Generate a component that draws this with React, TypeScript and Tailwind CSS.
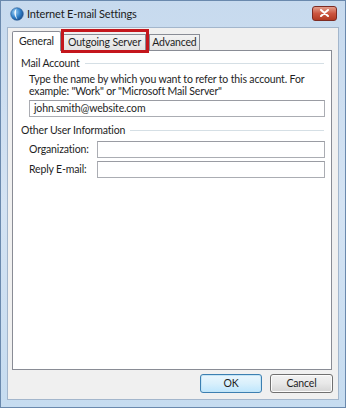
import React from "react";

const font = { fontFamily: 'Lato, "Noto Sans", Arial, sans-serif' };

const TitleIcon = () => (
  <svg width="14" height="14" viewBox="0 0 14 14">
    <defs>
      <radialGradient id="g1" cx="0.35" cy="0.35" r="0.7">
        <stop offset="0" stopColor="#9fd0f5" />
        <stop offset="0.6" stopColor="#2f7fc8" />
        <stop offset="1" stopColor="#1a4f8f" />
      </radialGradient>
    </defs>
    <circle cx="7" cy="7" r="6.3" fill="url(#g1)" stroke="#2a5d95" strokeWidth="0.6" />
    <path d="M6.5 1.5 C3.5 3.5 3.8 9.5 7.5 12.5 C5.5 9 5.6 4.5 6.5 1.5 Z" fill="#ffffff" opacity="0.9" />
  </svg>
);

const GroupLabel = ({ children }: { children: React.ReactNode }) => (
  <div className="flex items-center gap-[5px] pl-[8px] pr-[7px] h-[14px]">
    <span className="text-[10.5px] leading-[14px] text-[#1e1e1e] whitespace-nowrap">{children}</span>
    <div className="flex-1 h-px bg-[#d5dfe5] mt-[1px]" />
  </div>
);

const Field = ({ value = "", className = "" }: { value?: string; className?: string }) => (
  <div
    className={`h-[17px] bg-white border border-[#abadb3] border-t-[#9a9ca3] flex items-center px-[4px] text-[10.5px] text-[#1e1e1e] ${className}`}
  >
    {value}
  </div>
);

const App = () => {
  return (
    <div
      style={font}
      className="w-[346px] h-[408px] flex flex-col tracking-[-0.15px] bg-gradient-to-b from-[#c7daee] via-[#d4e3f3] to-[#c6dcf0] border border-[#6a89ad] overflow-hidden"
    >
      {/* title bar */}
      <div className="h-[26px] flex items-center pl-[9px] pr-[8px] shrink-0">
        <TitleIcon />
        <span className="ml-[3px] text-[11px] text-[#1b1b1b] mt-[1px]">Internet E-mail Settings</span>
        <div className="ml-auto mt-[-2px] w-[25px] h-[15px] rounded-[3px] border border-[#7d2b22] bg-gradient-to-b from-[#e29d8c] via-[#cc5640] to-[#b23a22] flex items-center justify-center">
          <svg width="9" height="8" viewBox="0 0 9 8">
            <path d="M1 1 L8 7 M8 1 L1 7" stroke="#ffffff" strokeWidth="2" strokeLinecap="round" />
          </svg>
        </div>
      </div>

      {/* client area */}
      <div className="flex-1 mx-[6px] mb-[7px] bg-[#f0f0f0] border border-[#a3b6cc] flex flex-col">
        {/* tabs */}
        <div className="flex items-end h-[20px] pl-[4px] mt-[2px]">
          <div className="h-[20px] px-[6px] bg-white border border-[#898c95] border-b-0 rounded-t-[2px] text-[10.5px] leading-[18px] text-[#1e1e1e] relative z-10 mb-[-1px]">
            General
          </div>
          <div className="relative ml-[3px]">
            <div className="h-[16px] px-[4px] bg-gradient-to-b from-[#f3f3f3] to-[#e3e3e3] border border-[#898c95] border-b-0 border-l-0 text-[10.5px] leading-[15px] text-[#1e1e1e]">
              Outgoing Server
            </div>
            <div className="absolute left-[-3px] right-[-3px] top-[-5px] bottom-[-3px] border-[3px] border-[#c4161c]" />
          </div>
          <div className="h-[16px] ml-[3px] px-[2px] bg-gradient-to-b from-[#f3f3f3] to-[#e3e3e3] border border-[#898c95] border-b-0 text-[10.5px] leading-[15px] text-[#1e1e1e]">
            Advanced
          </div>
        </div>

        {/* tab panel */}
        <div className="h-[320px] ml-[4px] mr-[6px] bg-white border border-[#898c95] pt-[5px] flex flex-col">
          <GroupLabel>Mail Account</GroupLabel>
          <div className="pl-[16px] pr-[6px] mt-[3px] text-[10.5px] leading-[12px] text-[#1e1e1e]">
            <p className="whitespace-nowrap">Type the name by which you want to refer to this account. For</p>
            <p className="whitespace-nowrap">example: "Work" or "Microsoft Mail Server"</p>
          </div>
          <div className="pl-[16px] pr-[6px] mt-[3px]">
            <Field value="john.smith@website.com" />
          </div>

          <div className="mt-[6px]">
            <GroupLabel>Other User Information</GroupLabel>
          </div>
          <div className="pl-[16px] pr-[6px] mt-[4px] grid grid-cols-[68px_1fr] gap-y-[3px] items-center text-[10.5px] text-[#1e1e1e]">
            <span className="whitespace-nowrap">Organization:</span>
            <Field />
            <span className="whitespace-nowrap">Reply E-mail:</span>
            <Field />
          </div>
        </div>

        {/* buttons */}
        <div className="flex justify-end gap-[8px] mr-[5px] mt-[4px]">
          <button className="w-[62px] h-[19px] rounded-[3px] border border-[#3c7fb1] bg-gradient-to-b from-[#eaf6fd] via-[#d9f0fc] to-[#bee6fd] text-[10.5px] leading-[15px] text-[#1e1e1e] shadow-[inset_0_0_0_1px_#c4e5f6]">
            OK
          </button>
          <button className="w-[63px] h-[19px] rounded-[3px] border border-[#707070] bg-gradient-to-b from-[#f2f2f2] via-[#e8e8e8] to-[#d4d4d4] text-[10.5px] leading-[15px] text-[#1e1e1e] shadow-[inset_0_0_0_1px_#fcfcfc]">
            Cancel
          </button>
        </div>
      </div>
    </div>
  );
};

export default App;
